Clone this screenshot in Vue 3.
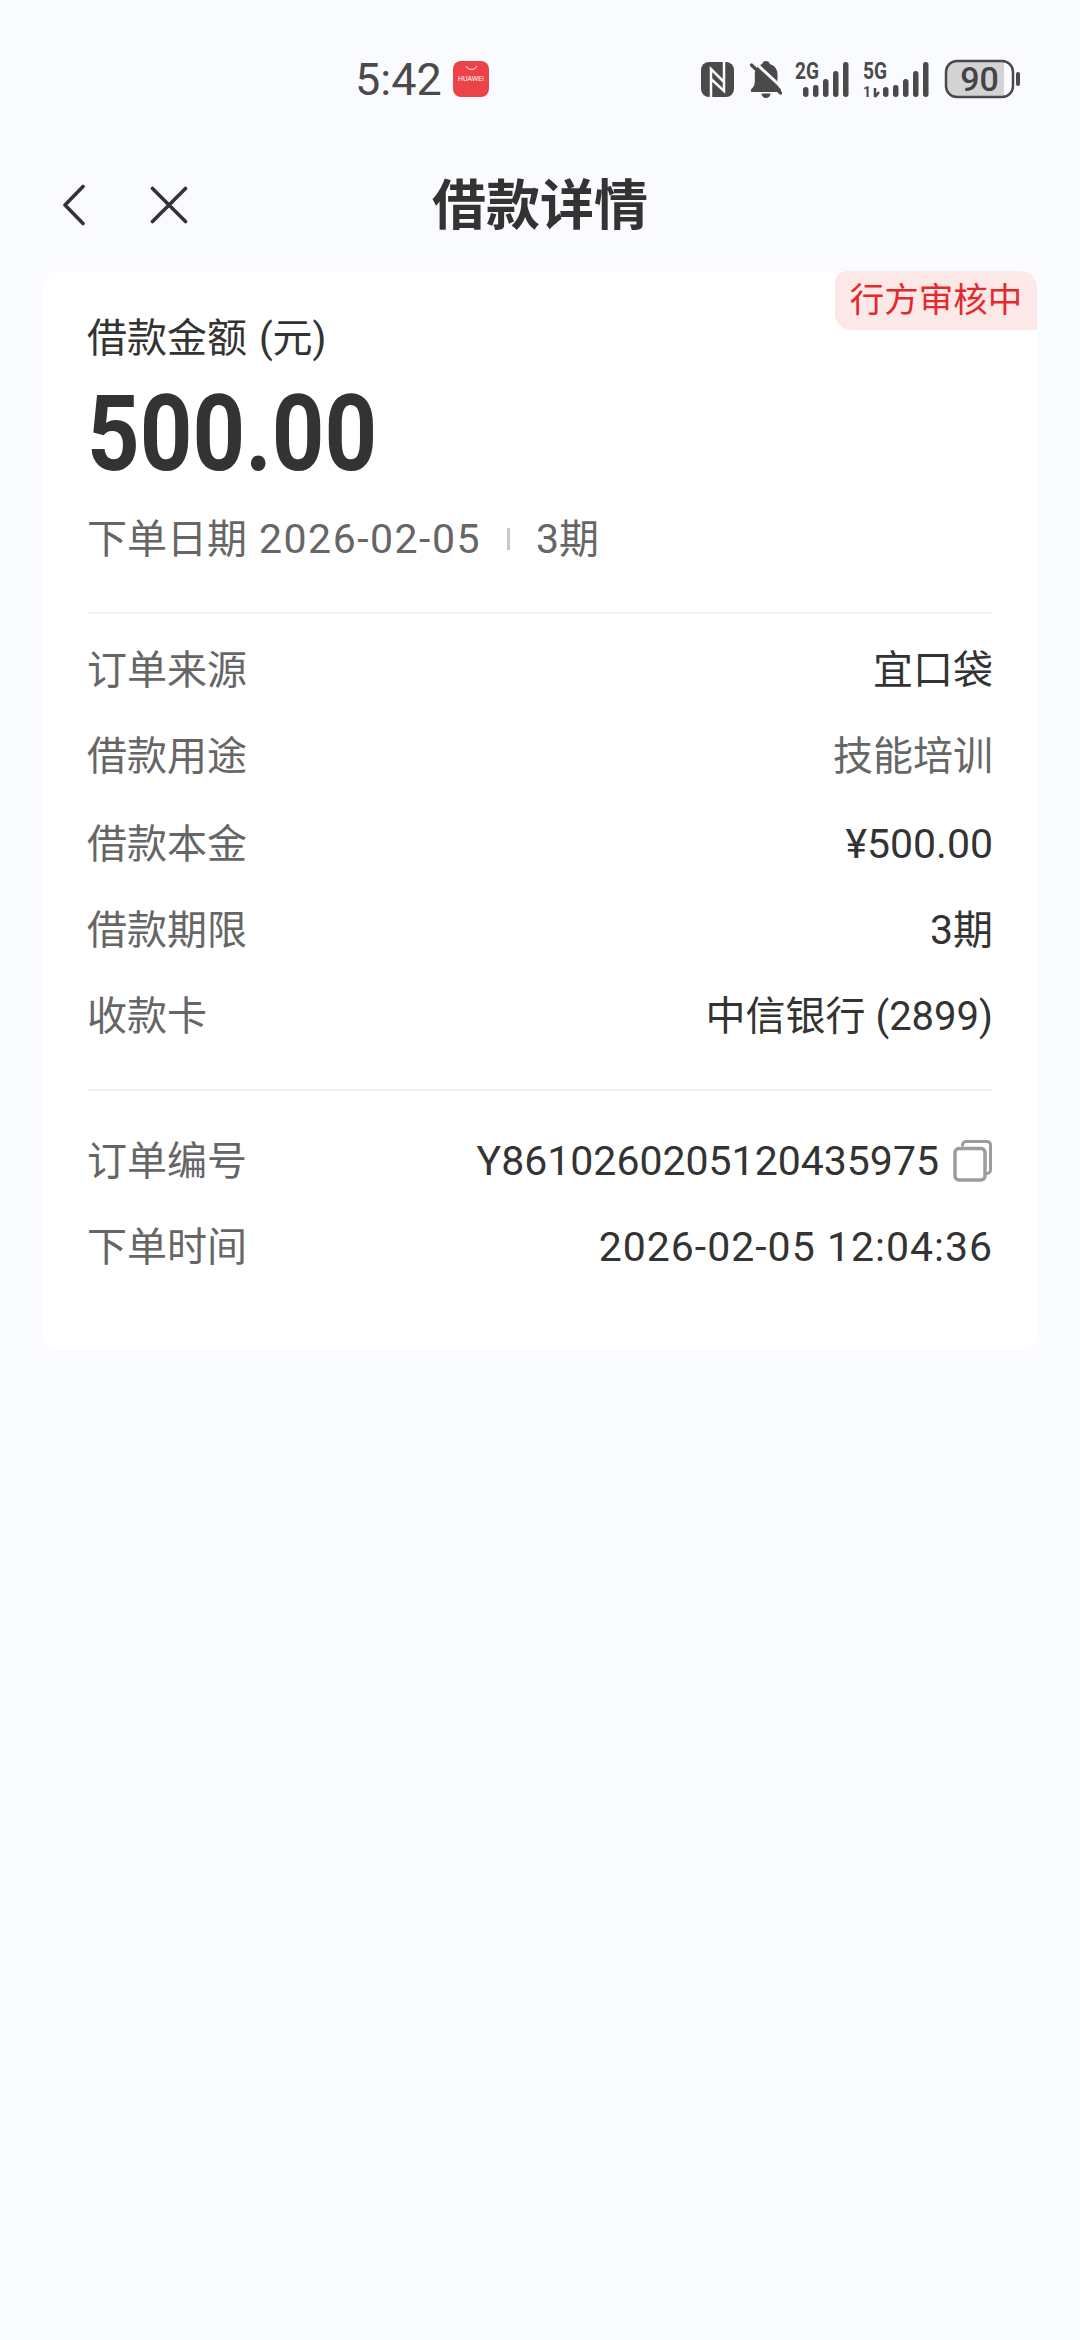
<template>
  <div class="page">
    <!-- status bar -->
    <div class="status-bar">
      <span class="clock">5:42</span>
      <div class="app-badge">
        <svg class="app-smile" viewBox="0 0 16 8" width="16" height="8">
          <path d="M1.500 1.500 C3.500 6.500 12.500 6.500 14.500 1.500" fill="none" stroke="#fff" stroke-width="1.200" stroke-linecap="round" />
        </svg>
        <span class="app-name">HUAWEI</span>
      </div>
      <div class="status-icons">
        <svg class="ic-nfc" width="33" height="35" viewBox="0 0 33 35">
          <rect width="33" height="35" rx="8" fill="#4a4a4a" />
          <path d="M10 35V7L23 20M10 17L23 29V0" fill="none" stroke="#fafbff" stroke-width="2.500" />
        </svg>
        <svg class="ic-bell" width="34" height="38" viewBox="0 0 34 38">
          <path fill="#4a4a4a" d="M17 1c2 0 3.500 1.300 3.800 3 4.700 1.400 7.700 5.300 7.700 10.500V23c0 2.500 1.500 4.500 3.500 6.500V32H2v-2.500C4.500 27 5.800 25 5.800 21.500v-7C5.800 9.300 8.500 5.400 13.200 4 13.500 2.300 15 1 17 1zM12.500 33.500h9a4.500 4.500 0 0 1-9 0z" />
          <path stroke="#fafbff" stroke-width="3" d="M5 1.500l30 28" />
          <path stroke="#4a4a4a" stroke-width="3.200" stroke-linecap="round" d="M2.500 5l29 28" />
        </svg>
        <svg class="ic-net ic-2g" width="56" height="38" viewBox="0 0 56 38">
          <text x="0" y="19" class="net-text" textLength="24" lengthAdjust="spacingAndGlyphs">2G</text>
          <rect v-for="bar in bars2g" :key="bar.x" :x="bar.x" :y="bar.y" width="5.500" :height="37 - bar.y" rx="2.700" fill="#4a4a4a" />
        </svg>
        <svg class="ic-net ic-5g" width="66" height="38" viewBox="0 0 66 38">
          <text x="0" y="19" class="net-text" textLength="24" lengthAdjust="spacingAndGlyphs">5G</text>
          <text x="0" y="37" class="net-small">1</text>
          <path d="M12 28v9M12 37l4-5" stroke="#4a4a4a" stroke-width="2.500" fill="none" />
          <rect v-for="bar in bars5g" :key="bar.x" :x="bar.x" :y="bar.y" width="5.500" :height="37 - bar.y" rx="2.700" fill="#4a4a4a" />
        </svg>
        <svg class="ic-net ic-batt" width="78" height="40" viewBox="0 0 78 40">
          <rect x="2" y="2" width="67" height="36" rx="11" fill="#fafbff" />
          <path d="M13 2h47v36H13a11 11 0 0 1-11-11V13A11 11 0 0 1 13 2z" fill="#d3d3d5" />
          <rect x="2" y="2" width="67" height="36" rx="11" fill="none" stroke="#4a4a4a" stroke-width="2.500" />
          <rect x="72" y="13" width="4" height="14" rx="2" fill="#4a4a4a" />
          <text x="35.500" y="32" text-anchor="middle" class="battery-text">90</text>
        </svg>
      </div>
    </div>

    <!-- nav -->
    <div class="nav">
      <div class="nav-icons">
        <svg width="24" height="42" viewBox="0 0 24 42">
          <path d="M21 2.500L3 21l18 18.500" fill="none" stroke="#333" stroke-width="3.600" stroke-linecap="round" stroke-linejoin="round" />
        </svg>
        <svg width="38" height="38" viewBox="0 0 38 38">
          <path d="M2.500 2.500l33 33M35.500 2.500l-33 33" fill="none" stroke="#333" stroke-width="3.600" stroke-linecap="round" />
        </svg>
      </div>
      <h1 class="nav-title">借款详情</h1>
    </div>

    <!-- card -->
    <div class="card">
      <span class="status-tag">行方审核中</span>
      <div class="amount-label">借款金额 (元)</div>
      <div class="amount">500.00</div>
      <div class="date-line">
        <span>下单日期</span>
        <span class="num date date-val">2026-02-05</span>
        <i class="date-sep"></i>
        <span><span class="num">3</span>期</span>
      </div>

      <div class="divider first"></div>

      <div v-for="row in rows" :key="row.label" class="row">
        <span class="row-label">{{ row.label }}</span>
        <span class="row-value" :class="{ muted: row.muted }">
          <span v-if="row.num" class="num">{{ row.num }}</span>{{ row.value }}
        </span>
      </div>

      <div class="divider second"></div>

      <div class="row">
        <span class="row-label">订单编号</span>
        <span class="row-value order">
          <span class="num">Y8610260205120435975</span>
          <svg class="copy-icon" width="40" height="42" viewBox="0 0 40 42">
            <path d="M9.500 6.500V5a3.500 3.500 0 0 1 3.500-3.500h21A3.500 3.500 0 0 1 37.500 5v25a3.500 3.500 0 0 1-3.500 3.500h-1.500" fill="none" stroke="#9c9c9c" stroke-width="3" />
            <rect x="2" y="8.500" width="30" height="31.500" rx="4" fill="none" stroke="#9c9c9c" stroke-width="3.500" />
          </svg>
        </span>
      </div>
      <div class="row">
        <span class="row-label">下单时间</span>
        <span class="row-value"><span class="num datetime">2026-02-05 12:04:36</span></span>
      </div>
    </div>
  </div>
</template>

<script setup>
const bars2g = [
  { x: 8, y: 27 },
  { x: 18, y: 25 },
  { x: 28, y: 19 },
  { x: 38, y: 11 },
  { x: 48, y: 2 },
]
const bars5g = [
  { x: 20, y: 27 },
  { x: 30, y: 25 },
  { x: 40, y: 19 },
  { x: 50, y: 11 },
  { x: 60, y: 2 },
]
const rows = [
  { label: '订单来源', value: '宜口袋' },
  { label: '借款用途', value: '技能培训', muted: true },
  { label: '借款本金', num: '¥500.00' },
  { label: '借款期限', num: '3', value: '期' },
  { label: '收款卡', value: '中信银行 (2899)' },
]
</script>

<style>
body {
  background: #fafbff;
}
</style>

<style scoped>
.page {
  width: 1080px;
  height: 2340px;
  background: #fafbff;
  font-family: Roboto, "Noto Sans CJK SC", sans-serif;
  color: #333;
  overflow: hidden;
}

.status-bar {
  display: flex;
  align-items: center;
  height: 78px;
  padding: 40px 58px 0 355px;
}

.clock {
  font-size: 45px;
  color: #4a4a4a;
  width: 98px;
}

.app-badge {
  width: 36px;
  height: 36px;
  border-radius: 8px;
  background: #ee4249;
  display: flex;
  flex-direction: column;
  align-items: center;
  color: #fff;
}

.app-smile {
  margin-top: 4px;
  width: 13px;
  height: 7px;
}

.app-name {
  font-size: 7px;
  line-height: 11px;
  margin-top: 2px;
}

.status-icons {
  margin-left: auto;
  display: flex;
  align-items: center;
}

.ic-net {
  overflow: visible;
}

.ic-bell {
  margin-left: 15px;
}

.ic-2g {
  margin-left: 12px;
}

.ic-5g {
  margin-left: 12px;
}

.ic-batt {
  margin-left: 15px;
}

.net-text {
  font-family: Roboto, sans-serif;
  font-size: 24px;
  font-weight: 700;
  fill: #4a4a4a;
}

.net-small {
  font-family: Roboto, sans-serif;
  font-size: 14px;
  font-weight: 700;
  fill: #4a4a4a;
}

.battery-text {
  font-family: Roboto, sans-serif;
  font-size: 34px;
  font-weight: 500;
  fill: #444;
}

.nav {
  position: relative;
  height: 153px;
  display: flex;
  align-items: center;
  justify-content: center;
}

.nav-icons {
  position: absolute;
  left: 62px;
  top: 66px;
  display: flex;
  align-items: center;
  gap: 64px;
}

.nav-title {
  margin: 0;
  font-size: 54px;
  font-weight: 700;
  color: #333;
  padding-top: 14px;
}

.card {
  position: relative;
  margin: 0 43px;
  padding: 40px 44px 60px;
  height: 1079px;
  box-sizing: border-box;
  background: #fff;
  border-radius: 16px;
}

.status-tag {
  position: absolute;
  top: 0;
  right: 0;
  width: 202px;
  height: 59px;
  box-sizing: border-box;
  padding-bottom: 8px;
  display: flex;
  align-items: center;
  justify-content: center;
  font-size: 34.5px;
  color: #e4282c;
  background: #fde8e8;
  border-radius: 12px 16px 0 16px;
}

.amount-label {
  font-size: 40px;
  line-height: 56px;
  color: #333;
  word-spacing: 2px;
}

.amount {
  font-size: 105px;
  font-weight: 700;
  line-height: 112px;
  margin-top: 12px;
  color: #333;
  transform: scaleX(0.875);
  transform-origin: left center;
}

.date-line {
  display: flex;
  align-items: baseline;
  margin-top: 20px;
  height: 56px;
  line-height: 56px;
  font-size: 40px;
  color: #666;
}

.date-val {
  margin-left: 12px;
}

.date-sep {
  align-self: center;
  width: 3px;
  height: 22px;
  margin: 0 26px;
  background: #c8c8c8;
}

.num {
  font-size: 41px;
}

.num.date {
  letter-spacing: 1.5px;
}

.num.datetime {
  letter-spacing: 1px;
}

.divider {
  height: 2px;
  background: #f2f2f2;
}

.divider.first {
  margin: 45px 0 14px;
}

.divider.second {
  margin: 29px 0 27px;
}

.row {
  display: flex;
  justify-content: space-between;
  align-items: baseline;
  height: 86.4px;
  line-height: 86.4px;
  font-size: 40px;
}

.row-label {
  color: #666;
}

.row-value {
  color: #333;
}

.row-value.muted {
  color: #666;
}

.order {
  display: flex;
  align-items: center;
  gap: 14px;
}
</style>
